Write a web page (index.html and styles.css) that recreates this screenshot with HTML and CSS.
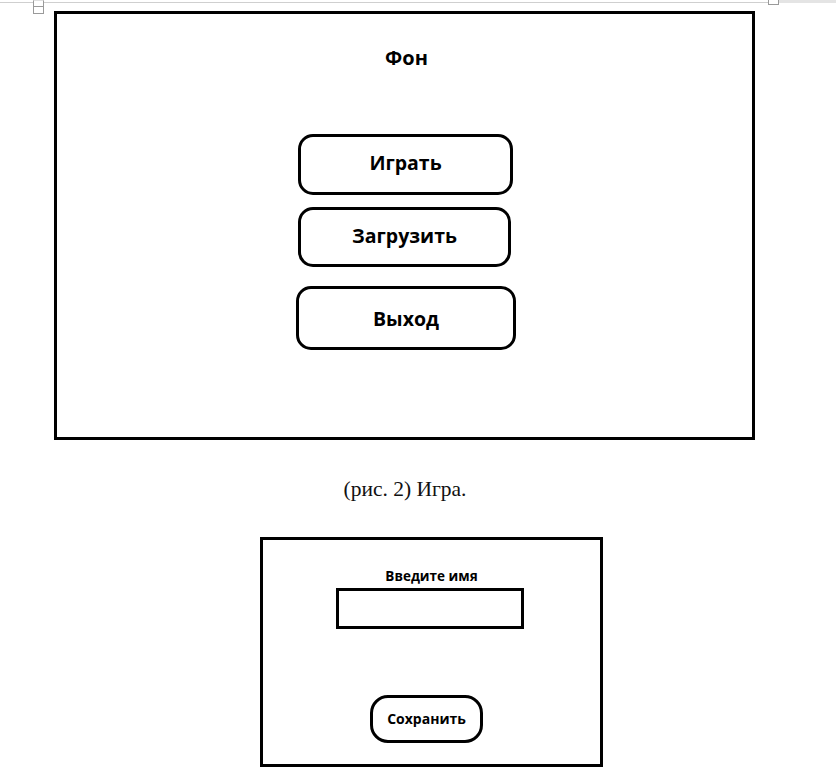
FILE: index.html
```html
<!DOCTYPE html>
<html lang="ru">
<head>
<meta charset="utf-8">
<title>Игра</title>
<link rel="stylesheet" href="styles.css">
</head>
<body>
<div class="page">
  <div class="ruler">
    <div class="rule seg-a"></div>
    <div class="handle handle-left"><div class="handle-mid"></div></div>
    <div class="rule seg-b"></div>
    <div class="handle handle-right"></div>
    <div class="band"></div>
  </div>

  <div class="frame menu">
    <div class="menu-title">Фон</div>
    <div class="btn btn-play">Играть</div>
    <div class="btn btn-load">Загрузить</div>
    <div class="btn btn-exit">Выход</div>
  </div>

  <div class="caption">(рис. 2) Игра.</div>

  <div class="frame dialog">
    <div class="dialog-title">Введите имя</div>
    <div class="name-field"></div>
    <div class="btn btn-save">Сохранить</div>
  </div>
</div>
</body>
</html>
```
FILE: styles.css
```css
* { box-sizing: border-box; }
html, body { margin: 0; padding: 0; background: #fff; }
body { width: 836px; height: 775px; overflow: hidden; }

.page {
  display: flex;
  flex-direction: column;
  align-items: flex-start;
  font-family: "Open Sans", "Noto Sans", sans-serif;
  color: #000;
}

/* top ruler strip */
.ruler {
  display: flex;
  align-items: flex-start;
  width: 836px;
  height: 11px;
}
.rule {
  height: 3px;
  border-bottom: 1px solid #cfcfcf;
}
.seg-a { width: 33px; }
.seg-b { width: 724px; }
.handle {
  width: 11px;
  border: 1px solid #9a9a9a;
  background: #fff;
}
.handle-left {
  height: 14px;
  border-top: 1px solid #e0e0e0;
}
.handle-mid {
  height: 6px;
  border-bottom: 1px solid #9a9a9a;
}
.handle-right {
  height: 5px;
  border-top: none;
}
.band {
  flex: 1;
  height: 3px;
  background: #e4e4e4;
}

.frame {
  border: 3px solid #000;
  background: #fff;
  display: flex;
  flex-direction: column;
  align-items: center;
}

.menu {
  margin-left: 54px;
  width: 701px;
  height: 429px;
  padding-top: 31px;
}
.menu-title {
  font-weight: 700;
  font-size: 20px;
  line-height: 26px;
  margin-bottom: 63px;
  margin-left: 4px;
}

.btn {
  display: flex;
  align-items: center;
  justify-content: center;
  border: 3px solid #000;
  border-radius: 15px;
  font-weight: 700;
  font-size: 19.5px;
  padding-bottom: 4px;
}
.btn-play { width: 215px; height: 61px; margin-bottom: 12px; margin-left: 2px; }
.btn-load { width: 213px; height: 60px; margin-bottom: 19px; }
.btn-exit { width: 220px; height: 64px; margin-left: 3px; padding-bottom: 0; }

.caption {
  margin-top: 37px;
  width: 810px;
  text-align: center;
  font-family: "Liberation Serif", "Times New Roman", serif;
  font-size: 21.5px;
  line-height: 24px;
  color: #111;
}

.dialog {
  margin-top: 36px;
  margin-left: 260px;
  width: 343px;
  height: 230px;
  padding-top: 27px;
}
.dialog-title {
  font-weight: 700;
  font-size: 13.5px;
  line-height: 19px;
  margin-bottom: 2px;
}
.name-field {
  width: 188px;
  height: 41px;
  border: 3px solid #000;
  margin-right: 3px;
}
.btn-save {
  margin-top: 66px;
  width: 113px;
  height: 48px;
  border-radius: 18px;
  font-size: 14px;
  margin-right: 10px;
  padding-bottom: 2px;
}
```
